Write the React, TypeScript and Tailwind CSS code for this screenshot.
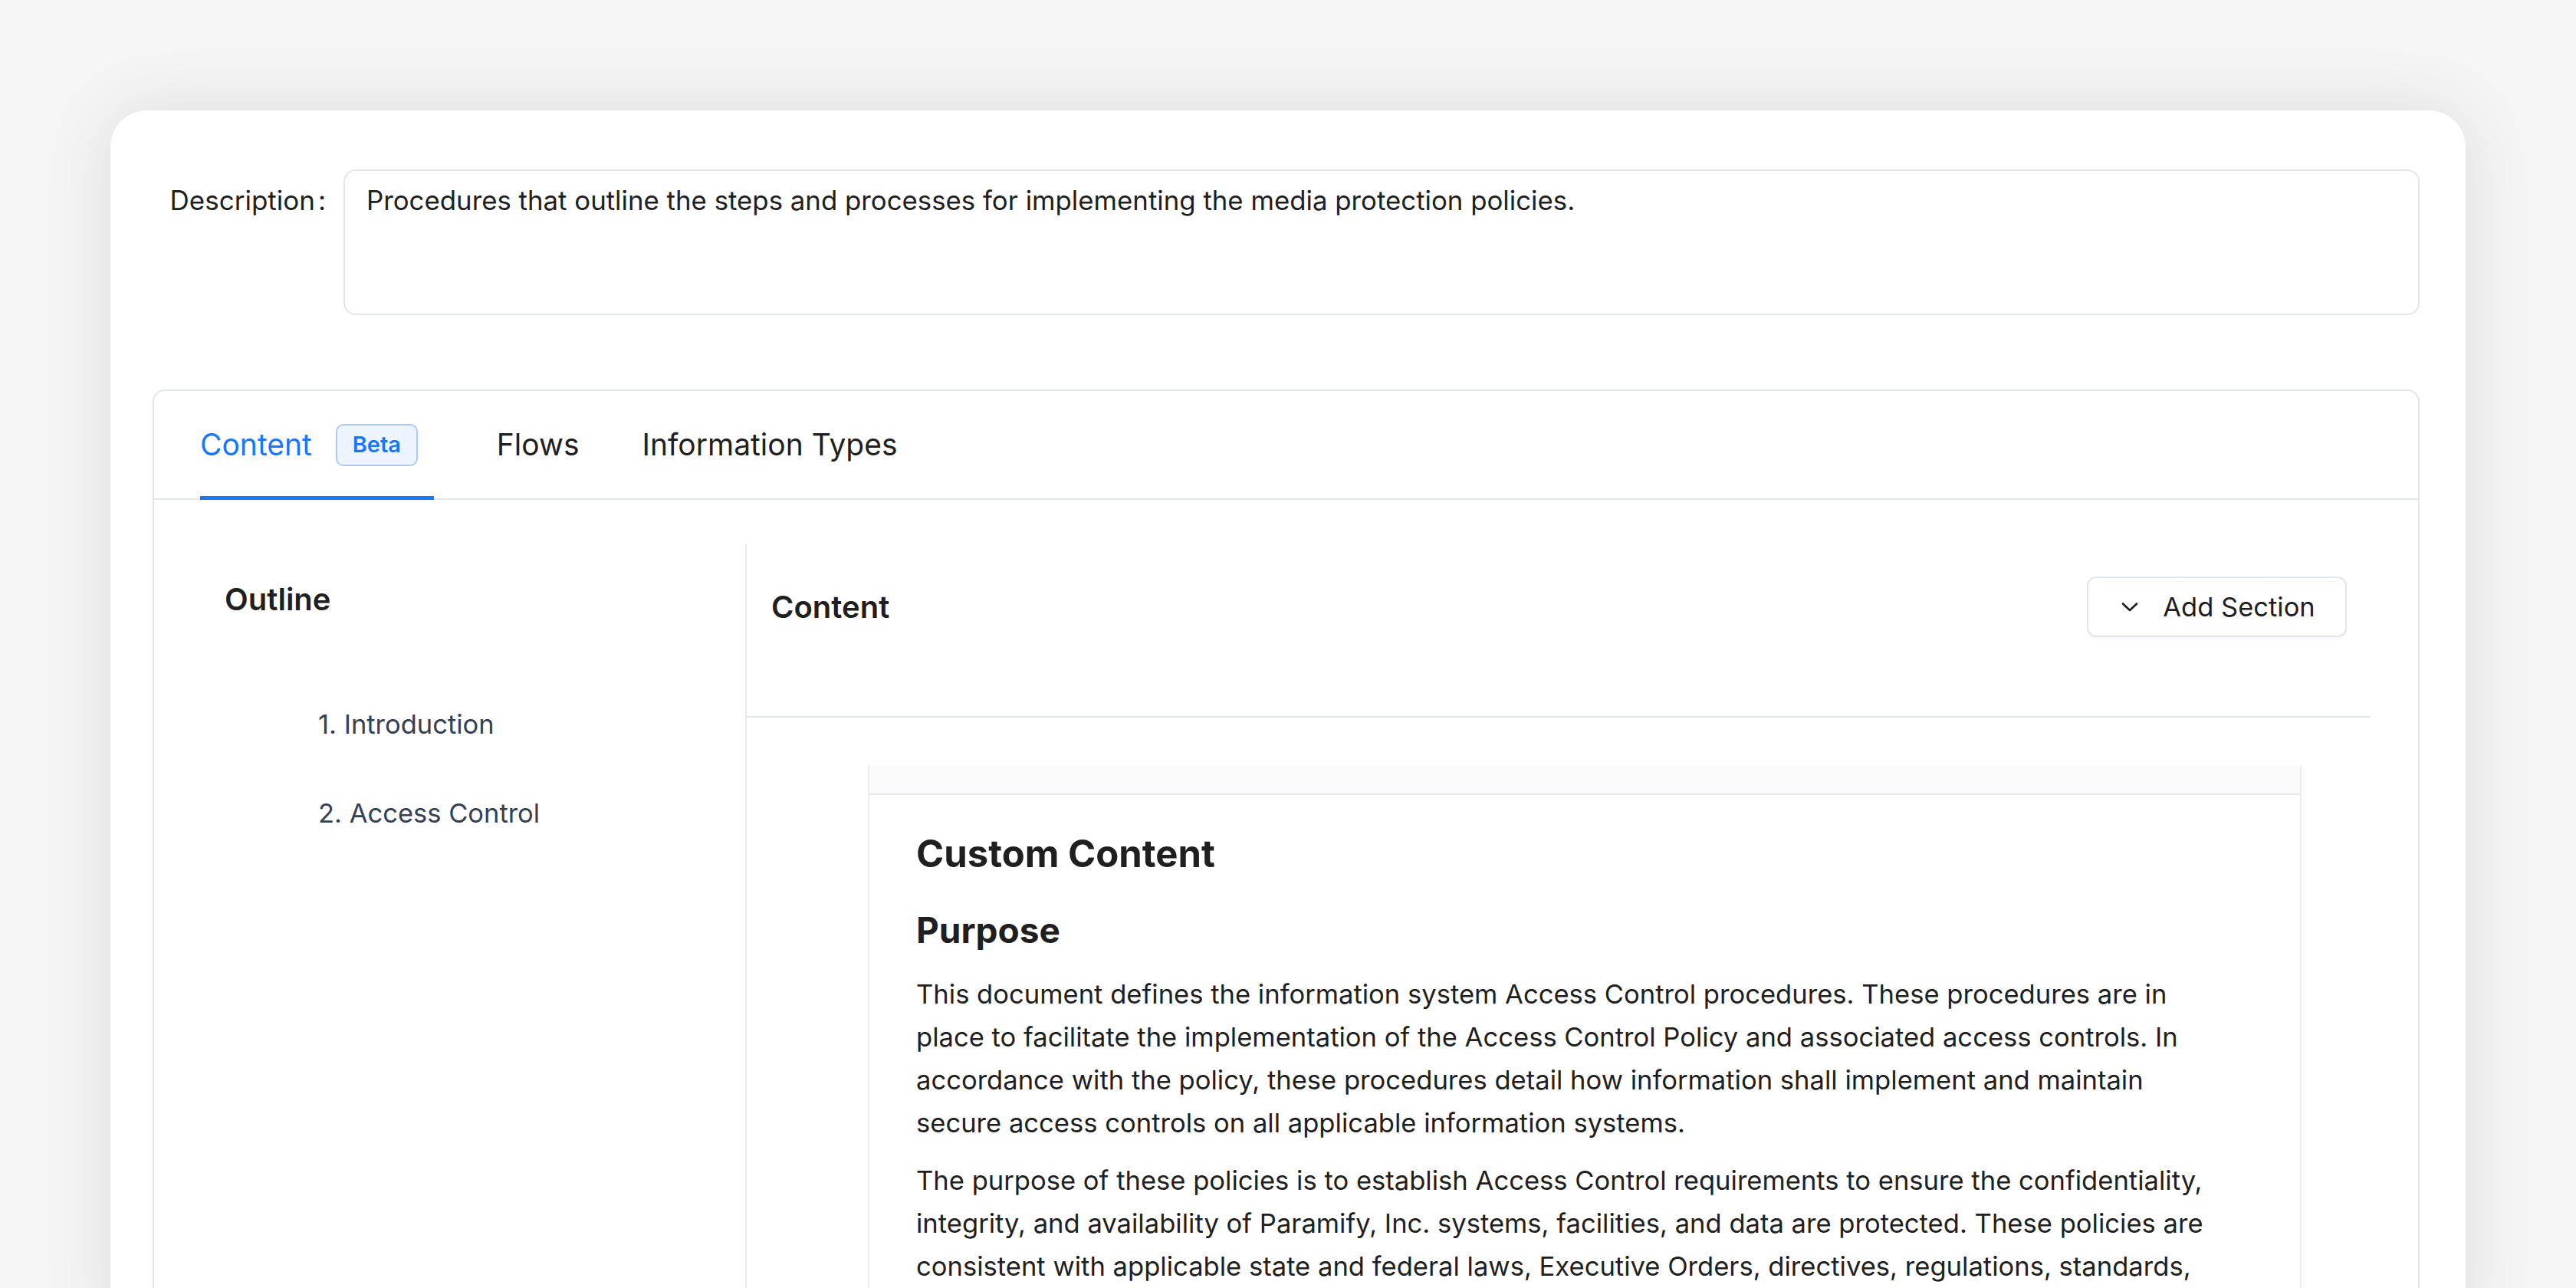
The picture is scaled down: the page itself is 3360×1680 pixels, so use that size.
const outline = ["1. Introduction", "2. Access Control"];

function Chevron() {
  return (
    <svg width="22" height="12" viewBox="0 0 22 12" fill="none">
      <path d="M2 1.5 L11 10 L20 1.5" stroke="#1f1f1f" strokeWidth="2.6" strokeLinecap="round" strokeLinejoin="round" />
    </svg>
  );
}

export default function App() {
  return (
    <div className="h-[1680px] w-[3360px] overflow-hidden bg-[#f5f5f5] px-[144px] pt-[144px] font-[Inter,'Noto_Sans',sans-serif] text-[#1f1f1f]">
      <div className="h-[1600px] rounded-[48px] bg-white pl-[55px] pr-[60px] pt-[77px] shadow-[0_0_90px_rgba(0,0,0,0.1)]">
        {/* Description */}
        <div className="flex">
          <div className="flex w-[249px] shrink-0 justify-end pr-[23px] pt-[18px] text-[35px] leading-[44px]">
            <span>Description</span>
            <span className="ml-[4px]">:</span>
          </div>
          <div className="h-[190px] flex-1 rounded-[16px] border-2 border-[#e2e6ea] pl-[28px] pt-[16px] text-[34.8px] leading-[44px]">
            Procedures that outline the steps and processes for implementing the media protection policies.
          </div>
        </div>

        {/* Tabs card */}
        <div className="mt-[97px] h-[1200px] rounded-[16px] border-2 border-[#e2e6ea]">
          <div className="flex h-[142px] items-stretch gap-[82px] border-b-2 border-[#e2e6ea] pl-[60px]">
            <div className="relative flex items-center gap-[31px] pr-[21px]">
              <span className="text-[39px] text-[#1677ff]">Content</span>
              <span className="flex h-[55px] w-[107px] items-center justify-center rounded-[10px] border-2 border-[#a9c9ff] bg-[#edf4ff] text-[29px] font-semibold text-[#1677ff]">
                Beta
              </span>
              <div className="absolute -bottom-[2px] left-0 right-0 h-[5px] bg-[#1677ff]" />
            </div>
            <div className="flex items-center text-[39px]">Flows</div>
            <div className="flex items-center text-[39px]">Information Types</div>
          </div>

          <div className="flex pt-[58px]">
            {/* Outline */}
            <div className="w-[771px] shrink-0">
              <div className="mt-[48px] pl-[92px] text-[40px] font-semibold leading-[48px]">Outline</div>
              <div className="mt-[117px] flex flex-col gap-[72px] pl-[214px]">
                {outline.map((o) => (
                  <div key={o} className="text-[34.5px] leading-[44px] text-[#344054]">
                    {o}
                  </div>
                ))}
              </div>
            </div>

            {/* Content */}
            <div className="flex-1 border-l-2 border-[#e8eaed] pr-[62px]">
              <div className="flex h-[226px] items-start justify-between border-b-2 border-[#e2e6ea] pl-[32px] pr-[31px] pt-[42px]">
                <div className="flex h-[79px] items-center text-[40px] font-semibold">Content</div>
                <button
                  type="button"
                  className="flex h-[79px] w-[339px] items-center justify-center gap-[32px] rounded-[12px] border-2 border-[#e2e6ea] bg-white pl-[4px] text-[34.5px] shadow-[0_4px_0_rgba(0,0,0,0.02)]"
                >
                  <Chevron />
                  Add Section
                </button>
              </div>

              <div className="ml-[158px] mt-[62px] w-[1870px] border-x-2 border-[#eceef0]">
                <div className="h-[39px] border-b-2 border-[#e6e9ec] bg-[#fafafa]" />
                <div className="pl-[61px] pt-[47px]">
                  <h1 className="text-[49px] font-bold leading-[60px]">Custom Content</h1>
                  <h2 className="mt-[39px] text-[46px] font-bold leading-[60px]">Purpose</h2>
                  <p className="mt-[25px] w-[1700px] text-[34.6px] leading-[56px]">
                    This document defines the information system Access Control procedures. These procedures are in place to
                    facilitate the implementation of the Access Control Policy and associated access controls. In accordance with
                    the policy, these procedures detail how information shall implement and maintain secure access controls on all
                    applicable information systems.
                  </p>
                  <p className="mt-[19px] w-[1700px] text-[34.6px] leading-[56px]">
                    The purpose of these policies is to establish Access Control requirements to ensure the confidentiality,
                    integrity, and availability of Paramify, Inc. systems, facilities, and data are protected. These policies are
                    consistent with applicable state and federal laws, Executive Orders, directives, regulations, standards, and
                    guidance.
                  </p>
                </div>
              </div>
            </div>
          </div>
        </div>
      </div>
    </div>
  );
}
